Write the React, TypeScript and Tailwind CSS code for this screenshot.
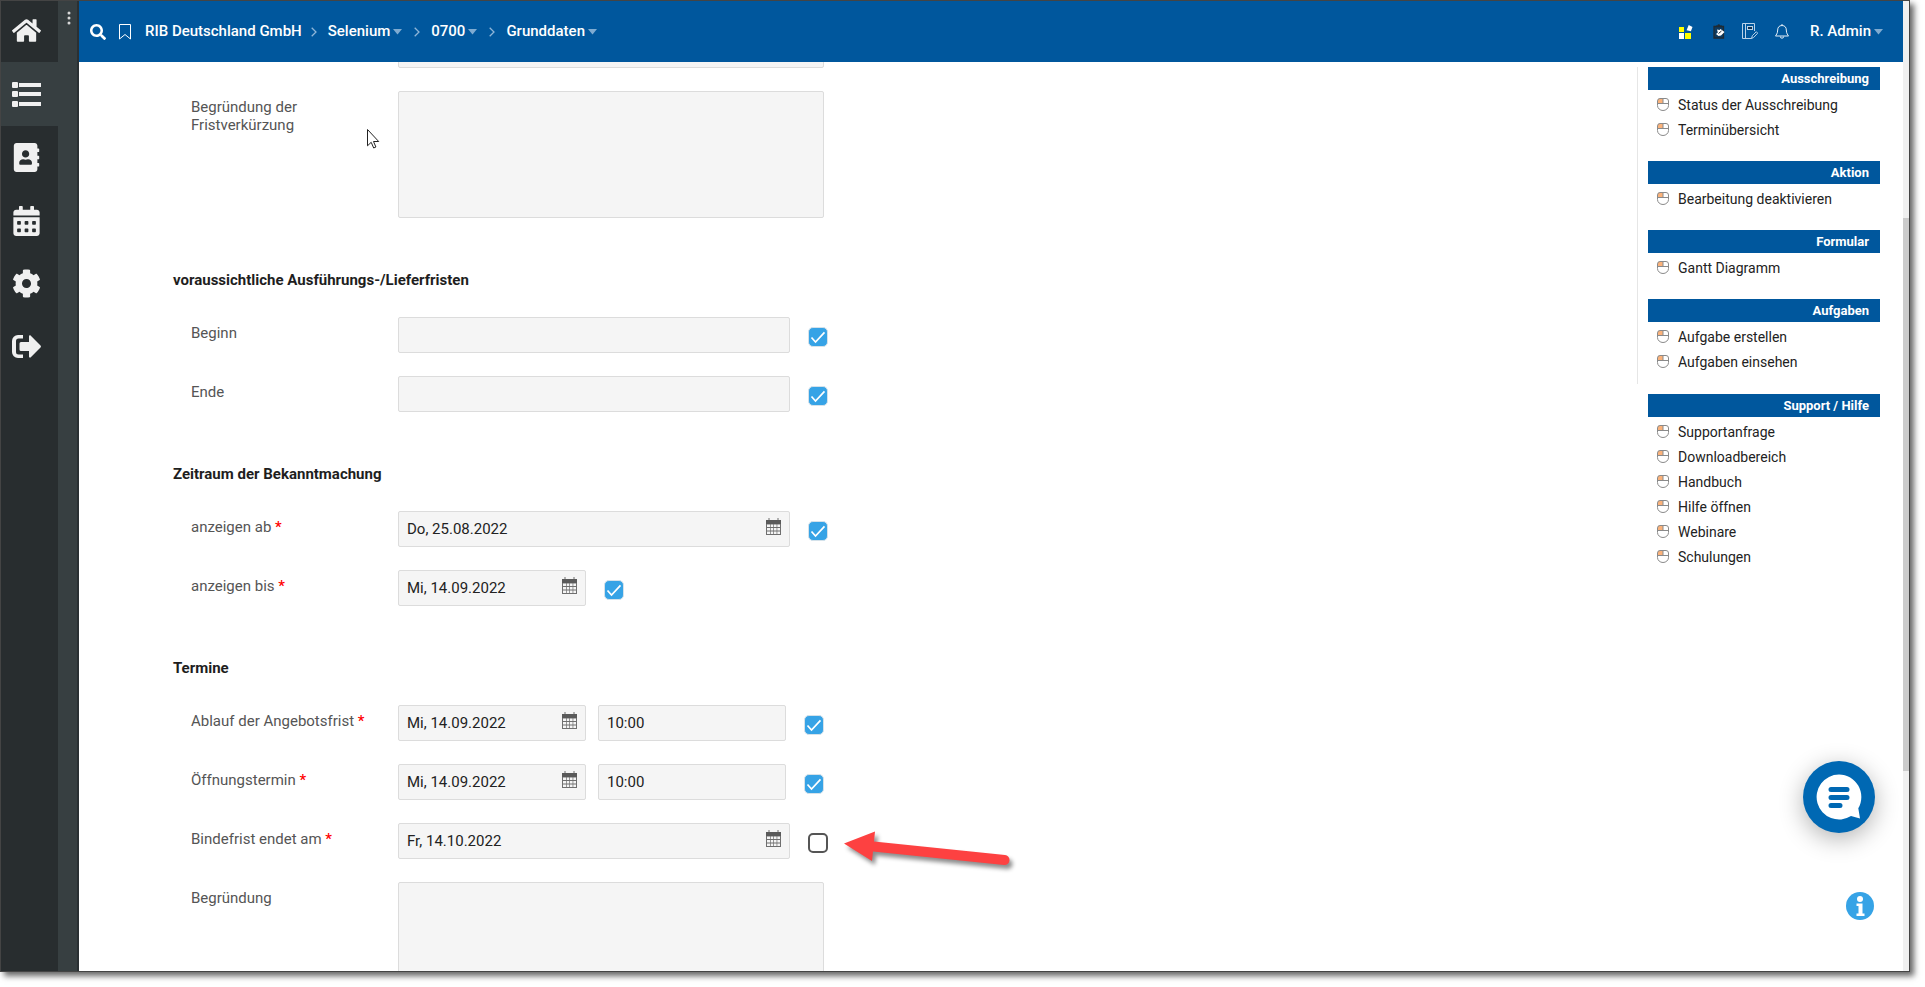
import { useState } from 'react';
import type { ReactNode } from 'react';
import { FaHome, FaAddressBook, FaCalendarAlt, FaCog, FaSearch } from 'react-icons/fa';

const actionGroups = [
  { title: 'Ausschreibung', items: ['Status der Ausschreibung', 'Terminübersicht'] },
  { title: 'Aktion', items: ['Bearbeitung deaktivieren'] },
  { title: 'Formular', items: ['Gantt Diagramm'] },
  { title: 'Aufgaben', items: ['Aufgabe erstellen', 'Aufgaben einsehen'] },
];

const supportGroup = {
  title: 'Support / Hilfe',
  items: ['Supportanfrage', 'Downloadbereich', 'Handbuch', 'Hilfe öffnen', 'Webinare', 'Schulungen'],
};

function ListIcon() {
  return (
    <svg width="29" height="25" viewBox="0 0 29 25" fill="currentColor">
      <rect x="0" y="0" width="6" height="6" rx="1" />
      <rect x="0" y="9" width="6" height="6" rx="1" />
      <rect x="0" y="19" width="6" height="6" rx="1" />
      <rect x="7" y="1" width="22" height="4" />
      <rect x="7" y="10" width="22" height="4" />
      <rect x="7" y="20" width="22" height="4" />
    </svg>
  );
}

function LogoutIcon() {
  return (
    <svg width="29" height="23" viewBox="0 0 29 23" fill="currentColor">
      <path d="M11 0H6a6 6 0 0 0-6 6v11a6 6 0 0 0 6 6h5v-3.500H6.500A2.500 2.500 0 0 1 4 17V6a2.500 2.500 0 0 1 2.500-2.500H11z" />
      <path d="M9 7h8V1.500c0-1 1-1.500 1.800-.8l9.700 9.900c.6.600.6 1.200 0 1.800l-9.700 9.900c-.8.700-1.800.2-1.800-.8V16H9a1.500 1.500 0 0 1-1.500-1.500v-6A1.500 1.500 0 0 1 9 7z" />
    </svg>
  );
}

function BookmarkIcon() {
  return (
    <svg width="12" height="16" viewBox="0 0 12 16" fill="none" stroke="currentColor" strokeWidth="1">
      <path d="M.5.5h11v14.500L6 10.500.5 15z" />
    </svg>
  );
}

function Chevron() {
  return (
    <svg width="6" height="10" viewBox="0 0 6 10" fill="none" stroke="#8fb6d8" strokeWidth="1.300">
      <path d="M.7.7 5 5 .7 9.300" />
    </svg>
  );
}

function Caret() {
  return (
    <svg width="9" height="6" viewBox="0 0 9 6" fill="#7fabd1">
      <path d="M0 0h9L4.500 5.500z" />
    </svg>
  );
}

function TilesIcon() {
  return (
    <svg width="14" height="14" viewBox="0 0 14 14">
      <rect x="0" y="2" width="5" height="5" fill="#ff0" />
      <rect x="0" y="8" width="5" height="6" fill="#fff" />
      <rect x="6" y="8" width="6" height="6" fill="#ff0" />
      <path d="m9.700 0 3.800 2-1.600 4.300-4.300-1.100z" fill="#fff" />
    </svg>
  );
}

function ClipboardIcon() {
  return (
    <svg width="12" height="15" viewBox="0 0 12 15">
      <path d="M1 2.500h9.500v11.500H1z" fill="#0d3a60" stroke="#1f2a33" strokeWidth="1.300" />
      <path d="M3 3V1.500h1.500a1.300 1.300 0 0 1 2.600 0H9V3z" fill="#1f2a33" />
      <path d="m4 5.500 2.500.5 1-1L11.500 8 8 11.500 5.500 12l-2.500-2 1.800-1.500z" fill="#fff" />
      <path d="m5.500 9.500 3-2.500" stroke="#1f2a33" strokeWidth="1" />
    </svg>
  );
}

function NotebookIcon() {
  return (
    <svg width="16" height="17" viewBox="0 0 16 17" fill="none" stroke="#b9d2e8" strokeWidth="1">
      <path d="M12.500 8V.5H.5v15h9M3.500.5v15" />
      <rect x="5.500" y="3.500" width="5" height="3" fill="#12324e" />
      <path d="m9.500 15.500.8-2.800 4-4 1.400 1.500-4 4.200z" />
    </svg>
  );
}

function BellIcon() {
  return (
    <svg width="14" height="15" viewBox="0 0 14 15" fill="none" stroke="#e4eef7" strokeWidth="1">
      <path d="M7 1.500c-3 0-4.300 2-4.300 4.500 0 3.500-1.700 5-2.200 6h13c-.5-1-2.200-2.500-2.200-6C11.300 3.500 10 1.500 7 1.500zM7 0v1.500M5.300 12.500a1.700 1.700 0 0 0 3.400 0" />
    </svg>
  );
}

function MouseIcon() {
  return (
    <svg width="12" height="13" viewBox="0 0 12 13" fill="none" stroke="#8a8a8a" strokeWidth="1">
      <path d="M1 .8h5v4.700H1z" fill="#fbb27a" stroke="none" />
      <path d="M.5 3A2.500 2.500 0 0 1 3 .5h6A2.500 2.500 0 0 1 11.500 3v4.500a5.500 5 0 0 1-11 0zM.5 5.500h11M6 .5v5" />
    </svg>
  );
}

function CalendarGridIcon() {
  return (
    <svg width="15" height="17" viewBox="0 0 15 17" fill="none">
      <rect x="0" y="2" width="15" height="15" fill="#6f6f6f" />
      <path d="M3 0v3M12 0v3" stroke="#6f6f6f" strokeWidth="1" />
      <rect x="0" y="2" width="15" height="4" fill="#5a5a5a" />
      <g fill="#f5f5f5">
        <path d="M1 6.500h3v2.500H1zM4.700 6.500h2.600v2.500H4.700zM8 6.500h2.600v2.500H8zM11.300 6.500H14v2.500h-2.700z" />
        <path d="M1 10h3v2.500H1zM4.700 10h2.600v2.500H4.700zM8 10h2.600v2.500H8zM11.300 10H14v2.500h-2.700z" />
        <path d="M1 13.500h3V16H1zM4.700 13.500h2.600V16H4.700zM8 13.500h2.600V16H8zM11.300 13.500H14V16h-2.700z" />
      </g>
    </svg>
  );
}

function SideButton({ label, active, children }: { label: string; active?: boolean; children: ReactNode }) {
  return (
    <button
      aria-label={label}
      className={
        active
          ? 'flex h-16 w-full items-center pl-[11px] bg-[#373f41]'
          : 'flex h-[63px] w-full items-center pl-[11px]'
      }
    >
      <span className="flex w-[29px] justify-center">{children}</span>
    </button>
  );
}

function Section({ title, children }: { title: string; children: ReactNode }) {
  return (
    <section className="mt-[53px]">
      <h2 className="mb-7 text-[15px] leading-[18px] font-bold text-[#1e1e1e]">{title}</h2>
      <div className="flex flex-col gap-[23px]">{children}</div>
    </section>
  );
}

function Row({ id, label, required, children }: { id: string; label: string; required?: boolean; children: ReactNode }) {
  return (
    <div className="flex items-start pl-[18px]">
      <label htmlFor={id} className="w-[207px] shrink-0 pt-[7px] pr-14 text-[15px] leading-[18px] text-[#555] has-[span]:pr-0">
        {label}
        {required && <span className="font-medium text-[#f00]"> *</span>}
      </label>
      {children}
    </div>
  );
}

const fieldClass = 'h-9 w-full rounded-xs border border-[#dcdcdc] bg-[#f5f5f5] px-2 text-[15px] text-[#222]';
const areaClass = 'block h-[127px] w-[426px] resize-none rounded-xs border border-[#dcdcdc] bg-[#f5f5f5] p-2 text-[15px]';

function DateField({ id, value, short }: { id: string; value: string; short?: boolean }) {
  return (
    <div className={short ? 'relative w-[188px]' : 'relative w-[392px]'}>
      <input id={id} type="text" defaultValue={value} className={fieldClass} />
      <button aria-label="Kalender öffnen" className="absolute top-[7px] right-[9px]">
        <CalendarGridIcon />
      </button>
    </div>
  );
}

function Check({ label, initial = true }: { label: string; initial?: boolean }) {
  const [checked, setChecked] = useState(initial);
  return (
    <span className="relative mt-2.5 ml-[18px] block h-5 w-5">
      <input
        type="checkbox"
        aria-label={label}
        checked={checked}
        onChange={(e) => setChecked(e.target.checked)}
        className="block h-5 w-5 appearance-none rounded-[5px] border-2 border-[#555] bg-white checked:border checked:border-[#d5e2ea] checked:bg-[#36a3e6]"
      />
      {checked && (
        <svg
          className="pointer-events-none absolute inset-0"
          width="20"
          height="20"
          viewBox="0 0 20 20"
          fill="none"
          stroke="#fff"
          strokeWidth="1.700"
        >
          <path d="m3.500 10.500 4 4.500 9-9.700" />
        </svg>
      )}
    </span>
  );
}

function ActionGroup({ title, items }: { title: string; items: string[] }) {
  return (
    <section>
      <h3 className="h-[23px] bg-[#00579d] pr-[11px] text-right text-[13px] leading-[23px] font-bold text-white">{title}</h3>
      <ul className="pt-0.5">
        {items.map((item) => (
          <li key={item}>
            <a href="#" className="flex h-[25px] items-center gap-[9px] pl-[9px] text-sm text-[#222]">
              <MouseIcon />
              {item}
            </a>
          </li>
        ))}
      </ul>
    </section>
  );
}

function Crumb({ children }: { children: string }) {
  return (
    <>
      <Chevron />
      <button className="mr-3 ml-[11px] flex items-center gap-[3px]">
        {children}
        <Caret />
      </button>
    </>
  );
}

export default function App() {
  return (
    <div className="h-screen overflow-hidden bg-white pr-[15px] pb-[15px] font-['Roboto',sans-serif]">
      <div className="relative flex h-full border border-[#444] shadow-[4px_4px_6px_0_rgba(0,0,0,0.6)]">
        {/* Main navigation */}
        <nav className="w-[57px] shrink-0 bg-[#282d2f] text-[#f0f0f0]">
          <div className="flex h-[61px] items-center pb-0.5">
            <SideButton label="Startseite">
              <FaHome size={29} />
            </SideButton>
          </div>
          <SideButton label="Liste" active>
            <ListIcon />
          </SideButton>
          <SideButton label="Adressbuch">
            <FaAddressBook size={29} />
          </SideButton>
          <SideButton label="Kalender">
            <FaCalendarAlt size={30} />
          </SideButton>
          <SideButton label="Einstellungen">
            <FaCog size={29} />
          </SideButton>
          <SideButton label="Abmelden">
            <LogoutIcon />
          </SideButton>
        </nav>
        <div className="flex w-[21px] shrink-0 items-start border-r-2 border-[#2a3033] bg-[#373f41] pt-2.5 pl-[9px]">
          <button aria-label="Menü">
            <svg width="4" height="14" viewBox="0 0 4 14" fill="#d8d8d8">
              <circle cx="2" cy="2" r="1.500" />
              <circle cx="2" cy="7" r="1.500" />
              <circle cx="2" cy="12" r="1.500" />
            </svg>
          </button>
        </div>

        <div className="flex min-w-0 flex-1 flex-col bg-white">
          {/* Top bar */}
          <header className="flex h-[61px] shrink-0 items-center bg-[#00579d] pr-5 pl-[11px] text-[15px] font-medium text-white">
            <button aria-label="Suche">
              <FaSearch size={16} />
            </button>
            <button aria-label="Lesezeichen" className="ml-[13px]">
              <BookmarkIcon />
            </button>
            <a href="#" className="mr-[9px] ml-[14px]">
              RIB Deutschland GmbH
            </a>
            <Crumb>Selenium</Crumb>
            <Crumb>0700</Crumb>
            <Crumb>Grunddaten</Crumb>
            <div className="ml-auto flex items-center gap-[17px]">
              <button aria-label="Anwendungen" className="mr-[3px]">
                <TilesIcon />
              </button>
              <button aria-label="Aufgaben">
                <ClipboardIcon />
              </button>
              <button aria-label="Notizen">
                <NotebookIcon />
              </button>
              <button aria-label="Benachrichtigungen">
                <BellIcon />
              </button>
              <button className="ml-1 flex items-center gap-[3px]">
                R. Admin
                <Caret />
              </button>
            </div>
          </header>

          <div className="flex min-h-0 flex-1">
            <main className="min-w-0 flex-1 overflow-hidden pl-[94px]">
              <div className="-mt-[30px] mb-[23px] ml-[225px] w-[426px]">
                <input type="text" aria-label="Fristverkürzung" className={fieldClass} />
              </div>
              <Row id="reason-short" label="Begründung der Fristverkürzung">
                <textarea id="reason-short" className={areaClass} />
              </Row>

              <Section title="voraussichtliche Ausführungs-/Lieferfristen">
                <Row id="start" label="Beginn">
                  <div className="w-[392px]">
                    <input id="start" type="text" className={fieldClass} />
                  </div>
                  <Check label="Beginn aktiv" />
                </Row>
                <Row id="end" label="Ende">
                  <div className="w-[392px]">
                    <input id="end" type="text" className={fieldClass} />
                  </div>
                  <Check label="Ende aktiv" />
                </Row>
              </Section>

              <Section title="Zeitraum der Bekanntmachung">
                <Row id="show-from" label="anzeigen ab" required>
                  <DateField id="show-from" value="Do, 25.08.2022" />
                  <Check label="anzeigen ab aktiv" />
                </Row>
                <Row id="show-to" label="anzeigen bis" required>
                  <DateField id="show-to" value="Mi, 14.09.2022" short />
                  <Check label="anzeigen bis aktiv" />
                </Row>
              </Section>

              <Section title="Termine">
                <Row id="offer-end" label="Ablauf der Angebotsfrist" required>
                  <DateField id="offer-end" value="Mi, 14.09.2022" short />
                  <div className="ml-3 w-[188px]">
                    <input type="text" aria-label="Uhrzeit Angebotsfrist" defaultValue="10:00" className={fieldClass} />
                  </div>
                  <Check label="Angebotsfrist aktiv" />
                </Row>
                <Row id="opening" label="Öffnungstermin" required>
                  <DateField id="opening" value="Mi, 14.09.2022" short />
                  <div className="ml-3 w-[188px]">
                    <input type="text" aria-label="Uhrzeit Öffnungstermin" defaultValue="10:00" className={fieldClass} />
                  </div>
                  <Check label="Öffnungstermin aktiv" />
                </Row>
                <Row id="binding" label="Bindefrist endet am" required>
                  <DateField id="binding" value="Fr, 14.10.2022" />
                  <div className="relative">
                    <Check label="Bindefrist aktiv" initial={false} />
                    <svg
                      className="pointer-events-none absolute top-1.5 left-[54px] drop-shadow-[3px_4px_2px_rgba(0,0,0,0.45)]"
                      width="168"
                      height="38"
                      viewBox="0 0 168 38"
                      fill="#fd4141"
                    >
                      <path d="M0 14.500 31 2.500 30 12.500 161 26a5 5 0 0 1-1 10L29 22.500 28 32z" />
                    </svg>
                  </div>
                </Row>
                <Row id="reason" label="Begründung">
                  <textarea id="reason" className={areaClass} />
                </Row>
              </Section>
            </main>

            {/* Actions */}
            <aside className="mt-[5px] w-[266px] shrink-0 pr-[23px]">
              <div className="mb-2.5 flex flex-col gap-[19px] border-l border-[#e6e6e6] pb-2.5 pl-[10px]">
                {actionGroups.map((group) => (
                  <ActionGroup key={group.title} title={group.title} items={group.items} />
                ))}
              </div>
              <div className="pl-[11px]">
                <ActionGroup title={supportGroup.title} items={supportGroup.items} />
              </div>
            </aside>
          </div>
        </div>

        {/* Scrollbar */}
        <div className="flex w-1.5 shrink-0 flex-col bg-[#f0f0f0]">
          <div className="basis-[22.400%]" />
          <div className="basis-[57%] bg-[#cbcbcb]" />
        </div>

        {/* Floating buttons */}
        <button
          aria-label="Chat"
          className="absolute right-[34px] bottom-[138px] flex h-[72px] w-[72px] items-center justify-center rounded-full bg-[#0068b3] shadow-[0_6px_24px_rgba(0,0,0,0.3)]"
        >
          <svg width="46" height="46" viewBox="0 0 46 46" fill="none">
            <path d="M23 .5a22.500 22.500 0 1 0 12 41.600l9 2.400-1.700-10.200A22.500 22.500 0 0 0 23 .5z" fill="#fff" />
            <path d="M15 15.500h16M15 23.500h16M15 31.500h9" stroke="#0068b3" strokeWidth="5" strokeLinecap="round" />
          </svg>
        </button>
        <button aria-label="Information" className="absolute right-[35px] bottom-[51px]">
          <svg width="28" height="28" viewBox="0 0 28 28">
            <circle cx="14" cy="14" r="14" fill="#36a3e6" />
            <circle cx="14" cy="7" r="3" fill="#fff" />
            <path d="M10.500 11.500h6v10h2V24h-8v-2.500h2V14h-2z" fill="#fff" />
          </svg>
        </button>

        {/* Mouse pointer */}
        <svg className="pointer-events-none absolute top-32 left-[366px]" width="13" height="20" viewBox="0 0 13 20">
          <path d="M.5.5v16.300l3.700-3.500 2.500 5.700 2.200-1-2.400-5.500h5.200z" fill="#fff" stroke="#222" />
        </svg>
      </div>
    </div>
  );
}
